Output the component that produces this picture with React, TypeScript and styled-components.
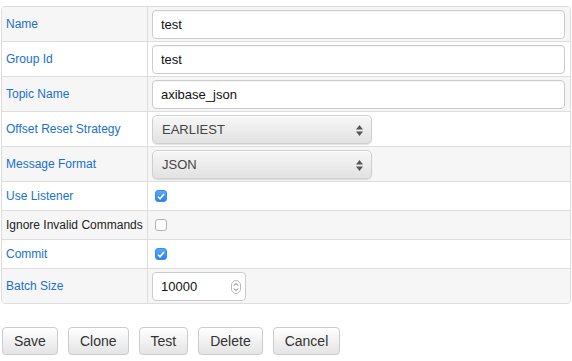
import styled, { createGlobalStyle } from 'styled-components'

const GlobalStyle = createGlobalStyle`
  body {
    margin: 0;
    background: #fff;
    font-family: "Liberation Sans", Arial, Helvetica, sans-serif;
    color: #333;
  }
`

const Page = styled.div`
  padding: 6px 1px 0 1px;
`

const Table = styled.div`
  border: 1px solid #ddd;
  border-radius: 4px;
  overflow: hidden;
`

const Row = styled.div<{ $striped: boolean; $tall: boolean }>`
  display: grid;
  grid-template-columns: 146px 1fr;
  height: ${(p) => (p.$tall ? 34 : 28)}px;
  background: ${(p) => (p.$striped ? '#f6f6f6' : '#fff')};
  border-bottom: 1px solid #ddd;
  &:last-child {
    border-bottom: none;
  }
`

const LabelCell = styled.div<{ $plain?: boolean }>`
  display: flex;
  align-items: center;
  padding: 0 4px;
  border-right: 1px solid #ddd;
  font-size: 12px;
  color: ${(p) => (p.$plain ? '#222' : '#1a6fcf')};
  white-space: nowrap;
`

const ValueCell = styled.div`
  display: flex;
  align-items: center;
  padding: 0 5px 0 4px;
`

const TextInput = styled.input`
  box-sizing: border-box;
  width: 100%;
  height: 29px;
  border: 1px solid #ccc;
  border-radius: 4px;
  background: #fff;
  padding: 0 8px;
  font-family: inherit;
  font-size: 13px;
  color: #111;
  outline: none;
  box-shadow: inset 0 1px 1px rgba(0, 0, 0, 0.04);
`

const SelectBox = styled.div`
  box-sizing: border-box;
  position: relative;
  width: 220px;
  height: 29px;
  display: flex;
  align-items: center;
  padding: 0 9px;
  border: 1px solid #cfcfcf;
  border-radius: 5px;
  background: linear-gradient(#f7f7f7, #e2e2e2);
  box-shadow: 0 1px 1px rgba(0, 0, 0, 0.12), inset 0 1px 0 #fff;
  font-size: 13px;
  color: #444;
`

const SelectArrows = styled.svg`
  position: absolute;
  right: 8px;
  top: 9px;
`

const NumberBox = styled.div`
  box-sizing: border-box;
  position: relative;
  width: 94px;
  height: 29px;
  display: flex;
  align-items: center;
  padding: 0 8px;
  border: 1px solid #ccc;
  border-radius: 4px;
  background: #fff;
  font-size: 13px;
  color: #111;
`

const Spinner = styled.svg`
  position: absolute;
  right: 4px;
  top: 7px;
`

const Check = styled.span<{ $on: boolean }>`
  box-sizing: border-box;
  width: 12px;
  height: 12px;
  margin-left: 3px;
  border-radius: 3px;
  display: flex;
  align-items: center;
  justify-content: center;
  border: 1px solid ${(p) => (p.$on ? '#3a8cf2' : '#b3b3b3')};
  background: ${(p) => (p.$on ? 'linear-gradient(#5aa8fc, #2a83f2)' : '#fff')};
`

const Buttons = styled.div`
  display: flex;
  gap: 10px;
  margin-top: 23px;
  padding-left: 1px;
`

const Button = styled.button`
  height: 28px;
  padding: 0 11px;
  border: 1px solid #ccc;
  border-radius: 4px;
  background: linear-gradient(#fff, #e4e4e4);
  box-shadow: inset 0 1px 0 rgba(255, 255, 255, 0.15), 0 1px 1px rgba(0, 0, 0, 0.075);
  font-family: inherit;
  font-size: 14px;
  color: #333;
`

type Field =
  | { label: string; kind: 'text'; value: string }
  | { label: string; kind: 'select'; value: string }
  | { label: string; kind: 'check'; value: boolean; plain?: boolean }
  | { label: string; kind: 'number'; value: string }

const fields: Field[] = [
  { label: 'Name', kind: 'text', value: 'test' },
  { label: 'Group Id', kind: 'text', value: 'test' },
  { label: 'Topic Name', kind: 'text', value: 'axibase_json' },
  { label: 'Offset Reset Strategy', kind: 'select', value: 'EARLIEST' },
  { label: 'Message Format', kind: 'select', value: 'JSON' },
  { label: 'Use Listener', kind: 'check', value: true },
  { label: 'Ignore Invalid Commands', kind: 'check', value: false, plain: true },
  { label: 'Commit', kind: 'check', value: true },
  { label: 'Batch Size', kind: 'number', value: '10000' },
]

function renderValue(f: Field) {
  switch (f.kind) {
    case 'text':
      return <TextInput defaultValue={f.value} readOnly />
    case 'select':
      return (
        <SelectBox>
          {f.value}
          <SelectArrows width="7" height="11" viewBox="0 0 7 11">
            <path d="M3.5 0 L7 4.5 H0 Z" fill="#555" />
            <path d="M3.5 11 L7 6.5 H0 Z" fill="#555" />
          </SelectArrows>
        </SelectBox>
      )
    case 'check':
      return (
        <Check $on={f.value}>
          {f.value && (
            <svg width="8" height="7" viewBox="0 0 8 7">
              <path d="M1 3.8 L3 5.8 L7 1" fill="none" stroke="#fff" strokeWidth="1.6" />
            </svg>
          )}
        </Check>
      )
    case 'number':
      return (
        <NumberBox>
          {f.value}
          <Spinner width="10" height="14" viewBox="0 0 10 14">
            <rect x="0.5" y="0.5" width="9" height="13" rx="4.5" fill="#fff" stroke="#bbb" />
            <path d="M3 5.5 L5 3.5 L7 5.5" fill="none" stroke="#666" strokeWidth="1" />
            <path d="M3 8.5 L5 10.5 L7 8.5" fill="none" stroke="#666" strokeWidth="1" />
          </Spinner>
        </NumberBox>
      )
  }
}

export default function App() {
  return (
    <Page>
      <GlobalStyle />
      <Table>
        {fields.map((f, i) => (
          <Row key={f.label} $striped={i % 2 === 0} $tall={f.kind !== 'check'}>
            <LabelCell $plain={f.kind === 'check' && f.plain}>{f.label}</LabelCell>
            <ValueCell>{renderValue(f)}</ValueCell>
          </Row>
        ))}
      </Table>
      <Buttons>
        <Button>Save</Button>
        <Button>Clone</Button>
        <Button>Test</Button>
        <Button>Delete</Button>
        <Button>Cancel</Button>
      </Buttons>
    </Page>
  )
}
